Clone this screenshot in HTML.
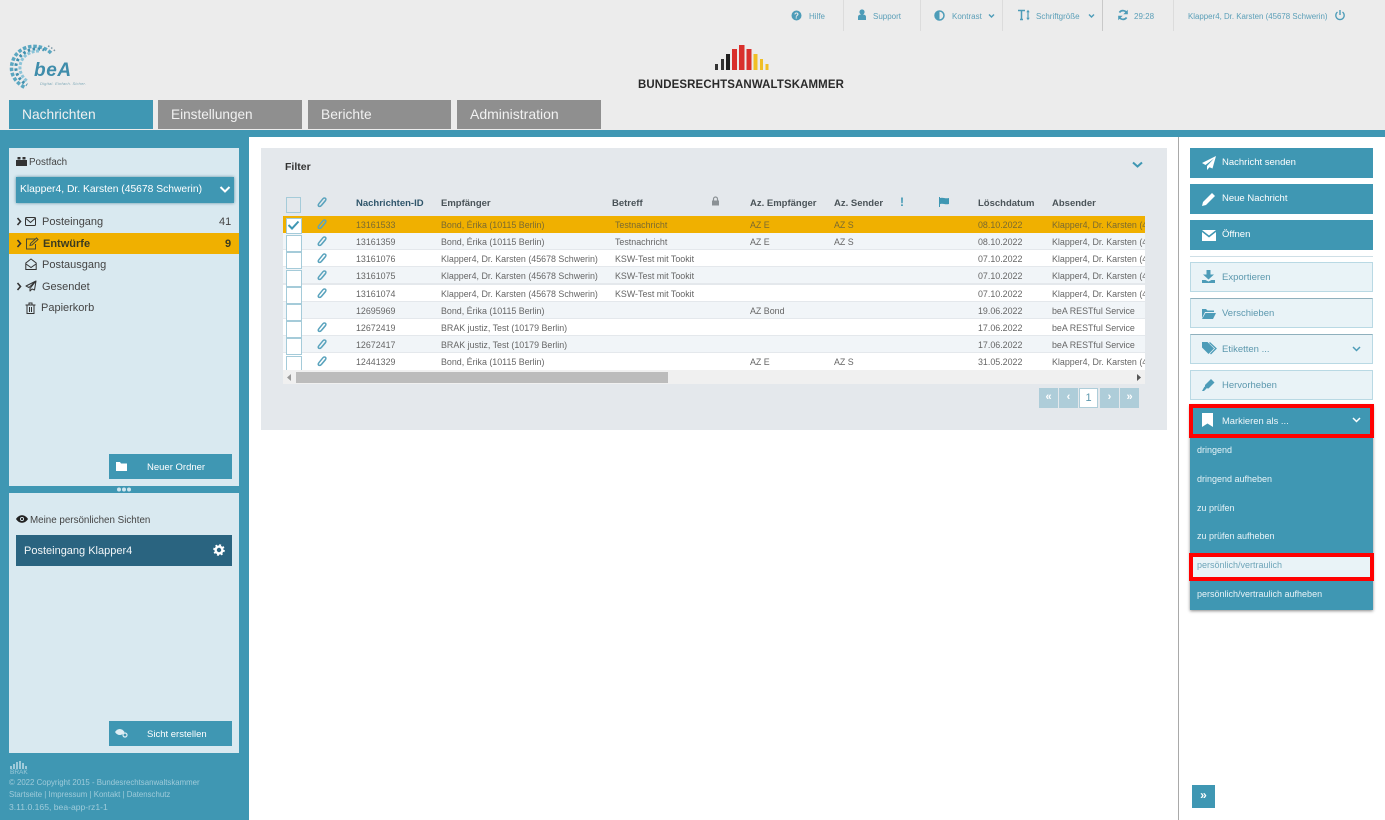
<!DOCTYPE html>
<html lang="de"><head><meta charset="utf-8"><title>beA</title>
<style>
html,body{margin:0;padding:0;width:1385px;height:820px;overflow:hidden;background:#fff;font-family:"Liberation Sans",Arial,sans-serif}
.a{position:absolute}
.t{position:absolute;white-space:nowrap}
.tab{position:absolute;top:100px;height:29px;background:#8f8f8f;color:#f1f1f1;font-size:13.8px;line-height:29px;box-sizing:border-box;padding-left:13px}
.top{position:absolute;top:12px;font-size:8px;color:#5b9fb8;white-space:nowrap}
.sep{position:absolute;top:0;width:1px;height:31px;background:#dcdcdc}
.nav{position:absolute;left:41px;font-size:11px;color:#444;white-space:nowrap}
.row{position:absolute;left:283px;width:862px;height:17px;background:#fff;border-bottom:1px solid #e4e8ec;box-sizing:border-box;overflow:hidden}
.row.o{background:#f1f5f8}
.row.s{background:#f0b000;border-bottom:0}
.row span{position:absolute;top:4px;font-size:8.9px;line-height:11px;color:#666;white-space:nowrap}
.row.s span{color:#7a6a30}
.cb{position:absolute;left:286px;width:14px;height:15px;background:#fff;border:1px solid #a5cbd9}
.cl{position:absolute;left:317px}
.th{position:absolute;top:198px;font-size:9.5px;font-weight:bold;color:#4a5358;white-space:nowrap;line-height:11px}
.b1,.b2{position:absolute;left:1190px;width:183px;box-sizing:border-box;font-size:9.5px;white-space:nowrap}
.b1{background:#3f97b3;color:#fff;height:30px;line-height:30px;padding-left:32px}
.b2{background:#e9f3f7;color:#5c98ae;height:30px;line-height:29px;border:1px solid #b9d9e4;padding-left:31px}
.b1 svg,.b2 svg{position:absolute;left:11px;top:6px}
.m{position:absolute;left:1197px;font-size:9px;color:#e8f3f7;white-space:nowrap}
.pg{position:absolute;top:388px;width:19px;height:20px;background:#aecdd9;color:#fff;font-size:11px;font-weight:bold;text-align:center;line-height:19px}
.red{position:absolute;border:4px solid #f00;box-sizing:border-box}
</style></head><body>

<!-- header -->
<div class="a" style="left:0;top:0;width:1385px;height:130px;background:#ececec"></div>

<svg class="a" style="left:9px;top:44px" width="50" height="46" viewBox="0 0 50 46">
<g fill="none">
<path d="M42 9C32-1 12 0 5 14c-6 12-1 24 12 30" stroke="#5ba7c1" stroke-width="3.500" stroke-dasharray="3.500 1.800"/>
<path d="M35 6C22 2 9 10 7 21c-1 8 3 15 11 20" stroke="#3f8fae" stroke-width="3" stroke-dasharray="2.500 2.500" stroke-dashoffset="1"/>
<path d="M30 7C20 7 12 13 11 22c-.5 6 2 11 7 15" stroke="#8cc4d8" stroke-width="3" stroke-dasharray="3 1.500"/>
<path d="M39 2c3 1 5 3 7 5" stroke="#7a95a3" stroke-width="1.500" stroke-dasharray="1.500 2"/>
</g></svg>
<div class="t" style="left:34px;top:60px;font:italic bold 19px 'Liberation Sans',sans-serif;color:#3f8dab;letter-spacing:.6px">beA</div>
<div class="t" style="left:40px;top:81px;font:italic 4px 'Liberation Sans',sans-serif;color:#7fa9b8;letter-spacing:.2px">Digital. Einfach. Sicher.</div>

<svg class="a" style="left:714px;top:44px" width="56" height="28">
<rect x="1" y="20" width="3" height="6" fill="#333"/><rect x="7" y="15" width="3" height="11" fill="#333"/><rect x="12" y="10" width="4" height="16" fill="#1f1f1f"/>
<rect x="18" y="5" width="5" height="21" fill="#d9302c"/><rect x="25" y="1" width="5.500" height="25" fill="#d9302c"/><rect x="32.500" y="5" width="5" height="21" fill="#d9302c"/>
<rect x="39.500" y="10" width="4" height="16" fill="#f0bf26"/><rect x="46" y="15" width="3" height="11" fill="#f0bf26"/><rect x="51.500" y="20" width="3" height="6" fill="#f0bf26"/>
</svg>
<div class="t" style="left:638px;top:77px;font-size:12px;font-weight:bold;color:#2a2a2a;letter-spacing:.15px;transform-origin:left top;transform:scaleX(.953)">BUNDESRECHTSANWALTSKAMMER</div>

<!-- top bar -->
<svg class="a" style="left:791px;top:10px" width="11" height="11"><circle cx="5.500" cy="5.500" r="5" fill="#4d9cb8"/><text x="5.500" y="8.500" font-size="8" font-weight="bold" fill="#ececec" text-anchor="middle" font-family="Liberation Sans">?</text></svg>
<div class="top" style="left:809px">Hilfe</div><div class="sep" style="left:843px"></div>
<svg class="a" style="left:857px;top:9px" width="10" height="12"><circle cx="5" cy="3" r="2.600" fill="#4d9cb8"/><path d="M1 11V8c0-2 1.500-2.500 4-2.500S9 6 9 8v3z" fill="#4d9cb8"/></svg>
<div class="top" style="left:873px">Support</div><div class="sep" style="left:920px"></div>
<svg class="a" style="left:934px;top:10px" width="11" height="11"><circle cx="5.500" cy="5.500" r="4.500" fill="none" stroke="#4d9cb8" stroke-width="1.500"/><path d="M5.500 1a4.500 4.500 0 0 0 0 9z" fill="#4d9cb8"/></svg>
<div class="top" style="left:952px">Kontrast</div>
<svg class="a" style="left:988px;top:13px" width="7" height="6"><path d="M1 1.500l2.500 2.500L6 1.500" fill="none" stroke="#4d9cb8" stroke-width="1.400"/></svg>
<div class="sep" style="left:1002px"></div>
<svg class="a" style="left:1017px;top:9px" width="14" height="12"><path d="M1 1.500h7M4.500 1.500V10.500M3 10.500h3" stroke="#4d9cb8" stroke-width="1.500" fill="none"/><path d="M11 2v8" stroke="#4d9cb8" stroke-width="1.200"/><path d="M9.300 3.200L11 .8l1.700 2.400zM9.300 8.800L11 11.200l1.700-2.400z" fill="#4d9cb8"/></svg>
<div class="top" style="left:1036px">Schriftgröße</div>
<svg class="a" style="left:1088px;top:13px" width="7" height="6"><path d="M1 1.500l2.500 2.500L6 1.500" fill="none" stroke="#4d9cb8" stroke-width="1.400"/></svg>
<div class="sep" style="left:1102px;background:#c9c9c9"></div>
<svg class="a" style="left:1117px;top:9px" width="12" height="12"><path d="M10 4.500A4.300 4.300 0 0 0 2.400 3.500M2 7.500a4.300 4.300 0 0 0 7.600 1" fill="none" stroke="#4d9cb8" stroke-width="1.700"/><path d="M10.800 .8v4.500H6.300zM1.200 11.200V6.700h4.500z" fill="#4d9cb8"/></svg>
<div class="top" style="left:1134px">29:28</div><div class="sep" style="left:1173px"></div>
<div class="top" style="left:1188px;font-size:7.900px">Klapper4, Dr. Karsten (45678 Schwerin)</div>
<svg class="a" style="left:1334px;top:9px" width="12" height="12"><path d="M3.500 3a4.200 4.200 0 1 0 5 0" fill="none" stroke="#4d9cb8" stroke-width="1.300"/><path d="M6 1v5" stroke="#4d9cb8" stroke-width="1.400"/></svg>

<!-- tabs -->
<div class="tab" style="left:9px;width:144px;background:#3f97b3">Nachrichten</div>
<div class="tab" style="left:158px;width:144px;font-size:13.600px">Einstellungen</div>
<div class="tab" style="left:308px;width:143px">Berichte</div>
<div class="tab" style="left:457px;width:144px;font-size:14px">Administration</div>

<!-- blue structure -->
<div class="a" style="left:0;top:130px;width:1385px;height:7px;background:#3f97b3"></div>
<div class="a" style="left:0;top:130px;width:249px;height:690px;background:#3f97b3"></div>
<div class="a" style="left:1178px;top:137px;width:1px;height:683px;background:#a9a9a9"></div>

<!-- left panel -->
<div class="a" style="left:9px;top:148px;width:230px;height:338px;background:#d9e9f0"></div>
<svg class="a" style="left:16px;top:156px" width="11" height="11"><path d="M0 4h11v6H0zM1.500 1h3v2.500h-3zM6.500 1h3v2.500h-3z" fill="#333"/></svg>
<div class="t" style="left:29px;top:157px;font-size:9.800px;color:#444">Postfach</div>
<div class="a" style="left:16px;top:177px;width:218px;height:26px;background:#3f97b3;box-shadow:0 0 3px #5a8fa3"></div>
<div class="t" style="left:20px;top:184px;font-size:10.300px;color:#fff">Klapper4, Dr. Karsten (45678 Schwerin)</div>
<svg class="a" style="left:219px;top:185px" width="12" height="9"><path d="M1.500 2l4.500 4.500L10.500 2" fill="none" stroke="#fff" stroke-width="2"/></svg>

<div class="a" style="left:9px;top:233px;width:230px;height:21px;background:#f0b000"></div>
<svg class="a" style="left:16px;top:217px" width="6" height="100"><g fill="none" stroke="#333" stroke-width="1.600"><path d="M1.500 1l3 3.500-3 3.500"/><path d="M1.500 23l3 3.500-3 3.500"/><path d="M1.500 66l3 3.500-3 3.500"/></g></svg>
<svg class="a" style="left:25px;top:216px" width="12" height="12"><rect x=".5" y="1.500" width="10" height="8" rx="1" fill="none" stroke="#333"/><path d="M1 2.500l4.500 4 4.500-4" fill="none" stroke="#333"/></svg>
<svg class="a" style="left:25px;top:237px" width="14" height="13"><path d="M10 2H1.500v10h9V7" fill="none" stroke="#4a4a30"/><path d="M5 8.500l.5-2L11.500 1 13 2.500 7 8z" fill="none" stroke="#4a4a30"/></svg>
<svg class="a" style="left:25px;top:258px" width="12" height="13"><path d="M.8 5L6 1l5.200 4v6.500H.8z" fill="none" stroke="#333"/><path d="M1 6l5 3.500L11 6" fill="none" stroke="#333"/></svg>
<svg class="a" style="left:25px;top:280px" width="12" height="12"><path d="M11 1L1 6l3 1.500L11 1 5 8.500V11l2-2 2.500 1z" fill="none" stroke="#333" stroke-linejoin="round"/></svg>
<svg class="a" style="left:25px;top:302px" width="11" height="12"><path d="M2 3.500v8h7v-8M.5 3h10M4 3V1h3v2M4.500 5v5M6.500 5v5" fill="none" stroke="#333"/></svg>
<div class="nav" style="left:42px;top:216px">Posteingang</div><div class="t" style="left:219px;top:216px;font-size:11px;color:#444">41</div>
<div class="nav" style="left:43px;top:238px;font-weight:bold;color:#3b3b20">Entwürfe</div><div class="t" style="left:225px;top:238px;font-size:11px;font-weight:bold;color:#3b3b20">9</div>
<div class="nav" style="left:42px;top:259px">Postausgang</div>
<div class="nav" style="left:42px;top:281px">Gesendet</div>
<div class="nav" style="left:41px;top:302px">Papierkorb</div>

<div class="a" style="left:109px;top:454px;width:123px;height:25px;background:#3f97b3"></div>
<svg class="a" style="left:116px;top:461px" width="11" height="10"><path d="M0 1h4l1 1.500h6V10H0z" fill="#fff"/></svg>
<div class="t" style="left:147px;top:462px;font-size:9.500px;color:#fff">Neuer Ordner</div>
<svg class="a" style="left:116px;top:486px" width="16" height="7"><circle cx="3" cy="3.500" r="2" fill="#cfe5ee"/><circle cx="8" cy="3.500" r="2" fill="#cfe5ee"/><circle cx="13" cy="3.500" r="2" fill="#cfe5ee"/></svg>

<!-- left panel 2 -->
<div class="a" style="left:9px;top:493px;width:230px;height:260px;background:#d9e9f0"></div>
<svg class="a" style="left:16px;top:514px" width="12" height="10"><path d="M0 5c3-5 9-5 12 0-3 5-9 5-12 0z" fill="#222"/><circle cx="6" cy="5" r="2" fill="#d9e9f0"/><circle cx="6" cy="5" r="1.100" fill="#222"/></svg>
<div class="t" style="left:30px;top:515px;font-size:9.800px;color:#444">Meine persönlichen Sichten</div>
<div class="a" style="left:16px;top:535px;width:216px;height:31px;background:#2a6480"></div>
<div class="t" style="left:24px;top:545px;font-size:11px;color:#f2f6f8">Posteingang Klapper4</div>
<svg class="a" style="left:213px;top:544px" width="12" height="12"><circle cx="6" cy="6" r="3.400" fill="none" stroke="#fff" stroke-width="2.400"/><circle cx="6" cy="6" r="4.900" fill="none" stroke="#fff" stroke-width="1.800" stroke-dasharray="1.900 1.950"/></svg>
<div class="a" style="left:109px;top:721px;width:123px;height:25px;background:#3f97b3"></div>
<svg class="a" style="left:115px;top:728px" width="13" height="10"><path d="M0 4c2.500-4 7-4 9.500 0-2.500 4-7 4-9.500 0z" fill="#dfeef4"/><circle cx="10" cy="7" r="2" fill="none" stroke="#dfeef4" stroke-width="1.200"/></svg>
<div class="t" style="left:147px;top:729px;font-size:9.500px;color:#fff">Sicht erstellen</div>

<!-- footer -->
<svg class="a" style="left:10px;top:761px" width="17" height="8"><g fill="#9fcbda"><rect x="0" y="5" width="2" height="3"/><rect x="3" y="3" width="2" height="5"/><rect x="6" y="1" width="2" height="7"/><rect x="9" y="0" width="2" height="8"/><rect x="12" y="2" width="2" height="6"/><rect x="15" y="5" width="2" height="3"/></g></svg>
<div class="t" style="left:10px;top:769px;font-size:6.500px;color:#9fcbda">BRAK</div>
<div class="t" style="left:9px;top:778px;font-size:7.850px;color:#9fcbda">© 2022 Copyright 2015 - Bundesrechtsanwaltskammer</div>
<div class="t" style="left:9px;top:790px;font-size:7.850px;color:#9fcbda">Startseite | Impressum | Kontakt | Datenschutz</div>
<div class="t" style="left:9px;top:802px;font-size:8.600px;color:#9fcbda">3.11.0.165, bea-app-rz1-1</div>

<!-- filter panel -->
<div class="a" style="left:261px;top:148px;width:906px;height:282px;background:#e4e8ec"></div>
<div class="t" style="left:285px;top:161px;font-size:10.500px;font-weight:bold;color:#333">Filter</div>
<svg class="a" style="left:1132px;top:161px" width="11" height="8"><path d="M1 1.500l4.500 4 4.500-4" fill="none" stroke="#3f97b3" stroke-width="2"/></svg>

<svg width="0" height="0" style="position:absolute"><defs><symbol id="clip" viewBox="0 0 10 11"><path d="M8.700 3.200L4.200 8.600C3 10 1 9.500 1.300 7.800 1.400 7.300 1.800 6.800 2.200 6.300L6 1.700c1-1.200 3-.8 2.900.8 0 .5-.3 1-.7 1.500L4.600 8.300" fill="none" stroke="#5aa3bd" stroke-width="1.500"/></symbol></defs></svg>

<div class="a" style="left:286px;top:197px;width:13px;height:14px;border:1px solid #a5cbd9"></div>
<svg class="cl" style="top:197px" width="10" height="11"><use href="#clip"/></svg>
<div class="th" style="left:356px;color:#2f556a">Nachrichten-ID</div>
<div class="th" style="left:441px">Empfänger</div>
<div class="th" style="left:612px">Betreff</div>
<svg class="a" style="left:711px;top:196px" width="9" height="10"><path d="M2.500 4.500V3a2 2 0 0 1 4 0v1.500" fill="none" stroke="#8b9195" stroke-width="1.200"/><rect x="1" y="4.500" width="7" height="5" fill="#8b9195"/></svg>
<div class="th" style="left:750px">Az. Empfänger</div>
<div class="th" style="left:834px">Az. Sender</div>
<div class="t" style="left:900px;top:195px;font-size:12px;font-weight:bold;color:#3f97b3">!</div>
<svg class="a" style="left:939px;top:197px" width="11" height="10"><path d="M.5 0v10" stroke="#3f97b3"/><path d="M1 1c3-1 5 1 9 0v6C6 8 4 6 1 7z" fill="#3f97b3"/></svg>
<div class="th" style="left:978px">Löschdatum</div>
<div class="th" style="left:1052px">Absender</div>

<!-- rows -->
<div class="row s" style="top:216px"><span style="left:73px">13161533</span><span style="left:158px">Bond, Érika (10115 Berlin)</span><span style="left:332px">Testnachricht</span><span style="left:467px">AZ E</span><span style="left:551px">AZ S</span><span style="left:695px">08.10.2022</span><span style="left:769px">Klapper4, Dr. Karsten (45678 Schwerin)</span></div>
<div class="row o" style="top:233px"><span style="left:73px">13161359</span><span style="left:158px">Bond, Érika (10115 Berlin)</span><span style="left:332px">Testnachricht</span><span style="left:467px">AZ E</span><span style="left:551px">AZ S</span><span style="left:695px">08.10.2022</span><span style="left:769px">Klapper4, Dr. Karsten (45678 Schwerin)</span></div>
<div class="row" style="top:250px"><span style="left:73px">13161076</span><span style="left:158px">Klapper4, Dr. Karsten (45678 Schwerin)</span><span style="left:332px">KSW-Test mit Tookit</span><span style="left:695px">07.10.2022</span><span style="left:769px">Klapper4, Dr. Karsten (45678 Schwerin)</span></div>
<div class="row o" style="top:267px"><span style="left:73px">13161075</span><span style="left:158px">Klapper4, Dr. Karsten (45678 Schwerin)</span><span style="left:332px">KSW-Test mit Tookit</span><span style="left:695px">07.10.2022</span><span style="left:769px">Klapper4, Dr. Karsten (45678 Schwerin)</span></div>
<div class="row" style="top:285px"><span style="left:73px">13161074</span><span style="left:158px">Klapper4, Dr. Karsten (45678 Schwerin)</span><span style="left:332px">KSW-Test mit Tookit</span><span style="left:695px">07.10.2022</span><span style="left:769px">Klapper4, Dr. Karsten (45678 Schwerin)</span></div>
<div class="row o" style="top:302px"><span style="left:73px">12695969</span><span style="left:158px">Bond, Érika (10115 Berlin)</span><span style="left:467px">AZ Bond</span><span style="left:695px">19.06.2022</span><span style="left:769px">beA RESTful Service</span></div>
<div class="row" style="top:319px"><span style="left:73px">12672419</span><span style="left:158px">BRAK justiz, Test (10179 Berlin)</span><span style="left:695px">17.06.2022</span><span style="left:769px">beA RESTful Service</span></div>
<div class="row o" style="top:336px"><span style="left:73px">12672417</span><span style="left:158px">BRAK justiz, Test (10179 Berlin)</span><span style="left:695px">17.06.2022</span><span style="left:769px">beA RESTful Service</span></div>
<div class="row" style="top:353px;height:17px;border:0"><span style="left:73px">12441329</span><span style="left:158px">Bond, Érika (10115 Berlin)</span><span style="left:467px">AZ E</span><span style="left:551px">AZ S</span><span style="left:695px">31.05.2022</span><span style="left:769px">Klapper4, Dr. Karsten (45678 Schwerin)</span></div>

<!-- checkboxes -->
<div class="cb" style="top:218px;height:14px"></div><div class="cb" style="top:235px"></div><div class="cb" style="top:252px"></div><div class="cb" style="top:270px"></div><div class="cb" style="top:287px"></div><div class="cb" style="top:304px"></div><div class="cb" style="top:321px"></div><div class="cb" style="top:338px"></div><div class="cb" style="top:356px;height:13px"></div>
<svg class="a" style="left:287px;top:220px" width="13" height="10"><path d="M1.500 5l3.500 3.500L11.500 1.500" fill="none" stroke="#3f97b3" stroke-width="2"/></svg>

<!-- clips -->
<svg class="cl" style="top:219px" width="10" height="11"><use href="#clip"/></svg>
<svg class="cl" style="top:236px" width="10" height="11"><use href="#clip"/></svg>
<svg class="cl" style="top:253px" width="10" height="11"><use href="#clip"/></svg>
<svg class="cl" style="top:270px" width="10" height="11"><use href="#clip"/></svg>
<svg class="cl" style="top:288px" width="10" height="11"><use href="#clip"/></svg>
<svg class="cl" style="top:322px" width="10" height="11"><use href="#clip"/></svg>
<svg class="cl" style="top:339px" width="10" height="11"><use href="#clip"/></svg>
<svg class="cl" style="top:356px" width="10" height="11"><use href="#clip"/></svg>

<!-- scrollbar -->
<div class="a" style="left:283px;top:370px;width:862px;height:14px;background:#f0f0f0"></div>
<div class="a" style="left:296px;top:372px;width:372px;height:11px;background:#bcbcbc"></div>
<svg class="a" style="left:287px;top:374px" width="5" height="7"><path d="M4 0v7L0 3.500z" fill="#999"/></svg>
<svg class="a" style="left:1137px;top:374px" width="5" height="7"><path d="M0 0v7l4-3.500z" fill="#555"/></svg>

<!-- pager -->
<div class="pg" style="left:1039px">«</div><div class="pg" style="left:1059px">‹</div>
<div class="pg" style="left:1079px;background:#fff;color:#5c98ae;border:1px solid #aecdd9;box-sizing:border-box;font-weight:normal">1</div>
<div class="pg" style="left:1100px">›</div><div class="pg" style="left:1120px">»</div>

<!-- right column -->
<div class="b1" style="top:148px">Nachricht senden<svg width="14" height="14" style="left:12px;top:8px"><path d="M14 0L0 7l3.500 2L12 2.500 5 10v4l2.500-2.800 3 1.300z" fill="#fff"/></svg></div>
<div class="b1" style="top:184px">Neue Nachricht<svg width="14" height="14" style="left:12px;top:8px"><path d="M0 14l1-4L10 1l3 3-9 9z" fill="#fff"/></svg></div>
<div class="b1" style="top:220px">Öffnen<svg width="14" height="11" style="left:12px;top:10px"><path d="M0 0h14L7 5.500zM0 2l7 5.500L14 2v9H0z" fill="#fff"/></svg></div>
<div class="a" style="left:1190px;top:256px;width:183px;height:1px;background:#cfdfe6"></div>
<div class="b2" style="top:262px">Exportieren<svg width="13" height="13" style="left:11px;top:7px"><path d="M4.500 0h4v4.500H12L6.500 9.500 1 4.500h3.500zM0 10h3.500l3 1.500 3-1.500H13v3H0z" fill="#4d9cb8"/></svg></div>
<div class="b2" style="top:298px;border-top-color:#8fb0bd">Verschieben<svg width="14" height="10" style="left:11px;top:10px"><path d="M0 0h4l1.500 1.500H12V3H3L0 9zM3.500 4H14l-3 6H0z" fill="#4d9cb8"/></svg></div>
<div class="b2" style="top:334px;border-top-color:#8fb0bd">Etiketten ...<svg width="15" height="13" style="left:11px;top:7px"><path d="M0 0h5.500L12 6.500 6.500 12 0 5.500z" fill="#4d9cb8"/><path d="M7.500 .5L14 6.500 8.500 12" fill="none" stroke="#4d9cb8" stroke-width="1.300"/></svg><svg width="9" height="7" style="left:161px;top:11px"><path d="M1 1l3.500 3.500L8 1" fill="none" stroke="#4d9cb8" stroke-width="1.500"/></svg></div>
<div class="b2" style="top:370px">Hervorheben<svg width="13" height="13" style="left:11px;top:7px"><path d="M3 7L9 1l3.500 3.500-6 6L3 10zM2.500 8.500l2 2L2 13H0z" fill="#4d9cb8"/></svg></div>

<div class="a" style="left:1190px;top:405px;width:183px;height:205px;background:#3f97b3;box-shadow:0 1px 3px #888"></div>
<div class="t" style="left:1222px;top:415px;font-size:9.400px;color:#eef6f9">Markieren als ...</div>
<svg class="a" style="left:1202px;top:413px" width="11" height="14"><path d="M0 0h11v14L5.500 10.500 0 14z" fill="#fff"/></svg>
<svg class="a" style="left:1352px;top:417px" width="9" height="7"><path d="M1 1l3.500 3.500L8 1" fill="none" stroke="#fff" stroke-width="1.500"/></svg>
<div class="m" style="top:445px">dringend</div>
<div class="m" style="top:474px">dringend aufheben</div>
<div class="m" style="top:503px">zu prüfen</div>
<div class="m" style="top:531px">zu prüfen aufheben</div>
<div class="a" style="left:1190px;top:553px;width:183px;height:28px;background:#e9f3f7"></div>
<div class="m" style="top:560px;color:#6ea5b9">persönlich/vertraulich</div>
<div class="m" style="top:589px">persönlich/vertraulich aufheben</div>
<div class="red" style="left:1189px;top:404px;width:185px;height:34px"></div>
<div class="red" style="left:1189px;top:553px;width:185px;height:28px"></div>

<div class="a" style="left:1192px;top:785px;width:23px;height:23px;background:#3f97b3;color:#fff;font-size:12px;font-weight:bold;text-align:center;line-height:21px">»</div>
</body></html>
